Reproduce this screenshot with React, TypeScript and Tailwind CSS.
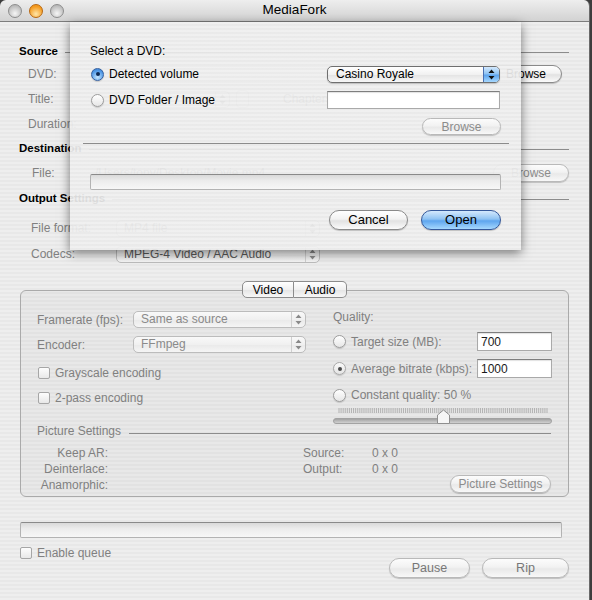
import React from 'react';

type Tone = 'normal' | 'disabled' | 'primary';

const buttonTones: Record<Tone, string> = {
  normal:
    'border-[#8a8a8a] text-black bg-[linear-gradient(180deg,#ffffff_0%,#f2f2f2_45%,#e2e2e2_55%,#fbfbfb_100%)]',
  disabled:
    'border-[#b9b9b9] text-[#8c8c8c] bg-[linear-gradient(180deg,#fcfcfc_0%,#f2f2f2_45%,#e9e9e9_55%,#f8f8f8_100%)]',
  primary:
    'border-[#34589a] text-black bg-[linear-gradient(180deg,#d4e9fd_0%,#8fc3f3_45%,#5ea5ee_55%,#a6d8fe_100%)]',
};

function AquaButton({ label, className = '', tone = 'normal' }: { label: string; className?: string; tone?: Tone }) {
  return (
    <div
      className={`flex items-center justify-center rounded-full border shadow-[0_1px_1px_rgba(0,0,0,0.2)] ${buttonTones[tone]} ${className}`}
    >
      {label}
    </div>
  );
}

function Arrows({ color }: { color: string }) {
  return (
    <svg width="7" height="11" viewBox="0 0 7 11">
      <path d="M3.5 0.5 L6.5 4 L0.5 4 Z M0.5 7 L6.5 7 L3.5 10.5 Z" fill={color} />
    </svg>
  );
}

function Popup({ text, className = '', tone = 'disabled' }: { text: string; className?: string; tone?: 'disabled' | 'blue' | 'dim' }) {
  if (tone === 'blue') {
    return (
      <div
        className={`flex h-[17px] rounded-[5px] border border-[#6f6f6f] bg-[linear-gradient(180deg,#ffffff,#f1f1f1_50%,#e3e3e3_51%,#f7f7f7)] shadow-[0_1px_1px_rgba(0,0,0,0.2)] overflow-hidden text-black ${className}`}
      >
        <span className="flex-1 pl-[8px] leading-[15px] truncate">{text}</span>
        <span className="w-[16px] flex items-center justify-center border-l border-[#4a6fb0] bg-[linear-gradient(180deg,#d4e9fd_0%,#8fc3f3_45%,#5ea5ee_55%,#a6d8fe_100%)]">
          <Arrows color="#111" />
        </span>
      </div>
    );
  }
  const text_ = tone === 'dim' ? 'text-[#5a5a5a]' : 'text-[#8a8a8a]';
  return (
    <div
      className={`flex h-[17px] rounded-[5px] border border-[#bcbcbc] bg-[linear-gradient(180deg,#f9f9f9,#f0f0f0_50%,#e9e9e9_51%,#f5f5f5)] overflow-hidden ${text_} ${className}`}
    >
      <span className="flex-1 pl-[7px] leading-[15px] truncate">{text}</span>
      <span className="w-[14px] flex items-center justify-center border-l border-[#cfcfcf]">
        <Arrows color="#8a8a8a" />
      </span>
    </div>
  );
}

function Checkbox({ label, className = '' }: { label: string; className?: string }) {
  return (
    <div className={`h-[16px] flex items-center ${className}`}>
      <span className="w-[12px] h-[12px] rounded-[2px] border border-[#a6a6a6] bg-[linear-gradient(180deg,#fdfdfd,#e8e8e8)]" />
      <span className="ml-[5px]">{label}</span>
    </div>
  );
}

function Radio({ label, checked = false, blue = false }: { label: string; checked?: boolean; blue?: boolean }) {
  const bulb = blue
    ? 'border-[#35609f] bg-[radial-gradient(circle_at_50%_75%,#c6e6ff,#4f98e6_65%,#3a7fd0)]'
    : blue === false && checked
      ? 'border-[#a8a8a8] bg-[linear-gradient(180deg,#fafafa,#e4e4e4)]'
      : 'border-[#9c9c9c] bg-[linear-gradient(180deg,#ffffff,#e6e6e6)]';
  return (
    <div className="flex items-center">
      <span className={`w-[13px] h-[13px] rounded-full border flex items-center justify-center shadow-[0_1px_1px_rgba(0,0,0,0.15)] ${bulb}`}>
        {checked && <span className={`w-[4px] h-[4px] rounded-full ${blue ? 'bg-[#0d2a55]' : 'bg-[#4a4a4a]'}`} />}
      </span>
      <span className="ml-[5px]">{label}</span>
    </div>
  );
}

function TextField({ value = '', className = '' }: { value?: string; className?: string }) {
  return (
    <div
      className={`bg-white border border-[#a9a9a9] border-t-[#7e7e7e] shadow-[inset_0_1px_1px_rgba(0,0,0,0.12)] pl-[3px] flex items-center text-[#1a1a1a] ${className}`}
    >
      {value}
    </div>
  );
}

function ProgressBar({ className = '' }: { className?: string }) {
  return (
    <div
      className={`h-[16px] rounded-[2px] border border-[#b3b3b3] border-t-[#8a8a8a] bg-[linear-gradient(180deg,#d9d9d9,#ececec_40%,#f7f7f7)] ${className}`}
    />
  );
}

function SectionHeader({ title, className = '' }: { title: string; className?: string }) {
  return (
    <div className={`h-[16px] flex items-center gap-[7px] ${className}`}>
      <span className="font-bold text-[11.5px] text-black">{title}</span>
      <span className="flex-1 h-px bg-[#8c8c8c]" />
    </div>
  );
}

function Slider() {
  const ticks = Array.from({ length: 101 }, (_, i) => 6 + i * 2.08);
  return (
    <svg width="219" height="20" viewBox="0 0 219 20">
      {ticks.map((x) => (
        <line key={x} x1={x} y1="3" x2={x} y2="8" stroke="#a4a4a4" strokeWidth="0.8" />
      ))}
      <defs>
        <linearGradient id="track" x1="0" y1="0" x2="0" y2="1">
          <stop offset="0" stopColor="#9c9c9c" />
          <stop offset="1" stopColor="#d6d6d6" />
        </linearGradient>
      </defs>
      <rect x="0.5" y="13.5" width="218" height="5" rx="2.5" fill="url(#track)" stroke="#a2a2a2" />
      <polygon points="110.5,5 116.5,10 116.5,18.5 104.5,18.5 104.5,10" fill="#f6f6f6" stroke="#8e8e8e" />
    </svg>
  );
}

function TrafficLights() {
  return (
    <div className="flex items-center gap-[7px] pl-[8px]">
      <span className="w-[14px] h-[14px] rounded-full border border-[#8d8d8d] bg-[radial-gradient(circle_at_50%_70%,#f6f6f6,#b9b9b9_75%)]" />
      <span className="w-[14px] h-[14px] rounded-full border border-[#b86710] bg-[radial-gradient(circle_at_50%_75%,#ffe6a8,#f49a1e_70%)]" />
      <span className="w-[14px] h-[14px] rounded-full border border-[#8d8d8d] bg-[radial-gradient(circle_at_50%_70%,#f6f6f6,#b9b9b9_75%)]" />
    </div>
  );
}

export default function App() {
  return (
    <div className="w-[592px] h-[600px] overflow-hidden bg-[#3d3d3d] font-['Liberation_Sans',Arial,sans-serif] text-[12px]">
      <div className="relative w-[590px] h-[600px] flex flex-col rounded-t-[6px] overflow-hidden border-r border-[#6a6a6a]">
        {/* Title bar */}
        <div className="relative h-[22px] flex items-center border-b border-[#7d7d7d] bg-[linear-gradient(180deg,#eeeeee,#d2d2d2)]">
          <TrafficLights />
          <span className="absolute inset-x-0 text-center text-[13.5px] text-black">MediaFork</span>
        </div>

        {/* Window body */}
        <div className="flex-1 flex flex-col pl-[19px] pr-[20px] text-[#808080] bg-[repeating-linear-gradient(180deg,#eeeeee_0px,#eeeeee_2px,#e8e8e8_2px,#e8e8e8_4px)]">
          <SectionHeader title="Source" className="mt-[22px]" />
          <div className="mt-[5px] h-[18px] flex items-center">
            <span className="ml-[9px] w-[88px]">DVD:</span>
            <Popup text="" className="w-[360px]" />
            <AquaButton label="Browse" className="ml-auto mr-[7px] w-[72px] h-[18px]" />
          </div>
          <div className="mt-[7px] h-[18px] flex items-center">
            <span className="ml-[9px] w-[88px]">Title:</span>
            <Popup text="" className="w-[114px]" />
            <span className="ml-[6px] w-[13px] h-[18px] rounded-[4px] border border-[#c6c6c6]" />
            <span className="ml-[34px]">Chapters:</span>
          </div>
          <div className="mt-[7px] h-[18px] flex items-center">
            <span className="ml-[9px] w-[88px]">Duration:</span>
          </div>

          <SectionHeader title="Destination" className="mt-[8px]" />
          <div className="mt-[7px] h-[18px] flex items-center">
            <span className="ml-[13px] w-[63px]">File:</span>
            <span>/Users/tony/Desktop/Movie.mp4</span>
            <AquaButton label="Browse" tone="disabled" className="ml-auto w-[76px] h-[18px]" />
          </div>

          <SectionHeader title="Output Settings" className="mt-[9px]" />
          <div className="mt-[12px] h-[18px] flex items-center">
            <span className="ml-[12px] w-[85px]">File format:</span>
            <Popup text="MP4 file" className="w-[204px]" />
          </div>
          <div className="mt-[8px] h-[18px] flex items-center">
            <span className="ml-[12px] w-[85px]">Codecs:</span>
            <Popup text="MPEG-4 Video / AAC Audio" tone="dim" className="w-[204px]" />
          </div>

          {/* Tabs */}
          <div className="relative z-10 mt-[18px] ml-[1px] flex justify-center text-black text-[12px]">
            <div className="w-[52px] h-[17px] flex items-center justify-center rounded-l-[5px] border border-[#8c8c8c] bg-[linear-gradient(180deg,#ffffff,#f0f0f0_50%,#e4e4e4_51%,#f7f7f7)]">
              Video
            </div>
            <div className="w-[53px] h-[17px] flex items-center justify-center rounded-r-[5px] border border-l-0 border-[#8c8c8c] bg-[linear-gradient(180deg,#ffffff,#f0f0f0_50%,#e4e4e4_51%,#f7f7f7)]">
              Audio
            </div>
          </div>
          <div className="-mt-[8px] ml-[1px] h-[207px] flex flex-col rounded-[6px] border border-[#aaaaaa] bg-black/[0.025]">
            <div className="h-[132px] grid grid-cols-[312px_1fr]">
              {/* Video left column */}
              <div className="pl-[16px] flex flex-col">
                <div className="mt-[20px] h-[17px] flex items-center">
                  <span className="w-[96px]">Framerate (fps):</span>
                  <Popup text="Same as source" className="w-[173px]" />
                </div>
                <div className="mt-[8px] h-[17px] flex items-center">
                  <span className="w-[96px]">Encoder:</span>
                  <Popup text="FFmpeg" className="w-[173px]" />
                </div>
                <Checkbox label="Grayscale encoding" className="mt-[12px] ml-[1px]" />
                <Checkbox label="2-pass encoding" className="mt-[9px] ml-[1px]" />
              </div>

              {/* Quality column */}
              <div className="pr-[17px] flex flex-col">
                <div className="mt-[18px] h-[16px] flex items-center">Quality:</div>
                <div className="mt-[7px] h-[19px] flex items-center">
                  <Radio label="Target size (MB):" />
                  <TextField value="700" className="ml-auto w-[75px] h-[19px]" />
                </div>
                <div className="mt-[8px] h-[19px] flex items-center">
                  <Radio label="Average bitrate (kbps):" checked />
                  <TextField value="1000" className="ml-auto w-[75px] h-[19px]" />
                </div>
                <div className="mt-[9px] h-[16px] flex items-center">
                  <Radio label="Constant quality: 50 %" />
                </div>
                <div className="mt-[2px] h-[20px]">
                  <Slider />
                </div>
              </div>
            </div>

            {/* Picture Settings */}
            <div className="h-[16px] pl-[16px] pr-[17px] flex items-center gap-[8px]">
              <span>Picture Settings</span>
              <span className="flex-1 h-px mt-[5px] bg-[#8c8c8c]" />
            </div>
            <div className="mt-[6px] pl-[16px] pr-[17px] flex">
              <div className="w-[71px] flex flex-col text-right">
                <span className="h-[16px] leading-[16px]">Keep AR:</span>
                <span className="h-[16px] leading-[16px]">Deinterlace:</span>
                <span className="h-[16px] leading-[16px]">Anamorphic:</span>
              </div>
              <div className="ml-[195px] flex flex-col">
                <div className="h-[16px] flex items-center">
                  <span className="w-[69px]">Source:</span>
                  <span>0 x 0</span>
                </div>
                <div className="h-[16px] flex items-center">
                  <span className="w-[69px]">Output:</span>
                  <span>0 x 0</span>
                </div>
              </div>
              <AquaButton
                label="Picture Settings"
                tone="disabled"
                className="ml-auto self-end w-[101px] h-[18px] text-[#6e6e6e]"
              />
            </div>
          </div>

          {/* Progress and actions */}
          <ProgressBar className="mt-[25px] ml-[1px] mr-[7px]" />
          <div className="mt-[7px] flex items-start">
            <Checkbox label="Enable queue" className="ml-[1px]" />
            <div className="ml-auto mt-[13px] flex gap-[12px] text-[12.5px]">
              <AquaButton label="Pause" tone="disabled" className="w-[81px] h-[20px] text-[#777]" />
              <AquaButton label="Rip" tone="disabled" className="w-[87px] h-[20px] text-[#777]" />
            </div>
          </div>
        </div>

        {/* Sheet */}
        <div className="absolute left-[70px] top-[22px] w-[451px] h-[228px] px-[20px] flex flex-col text-black shadow-[0_3px_10px_rgba(0,0,0,0.5)] bg-[repeating-linear-gradient(180deg,rgba(240,240,240,0.93)_0px,rgba(240,240,240,0.93)_2px,rgba(234,234,234,0.93)_2px,rgba(234,234,234,0.93)_4px)]">
          <div className="mt-[21px] h-[16px] leading-[16px]">Select a DVD:</div>
          <div className="mt-[6px] h-[18px] flex items-center">
            <div className="w-[237px] pl-[1px]">
              <Radio label="Detected volume" checked blue />
            </div>
            <Popup text="Casino Royale" tone="blue" className="w-[173px]" />
          </div>
          <div className="mt-[8px] h-[18px] flex items-center">
            <div className="w-[237px] pl-[1px]">
              <Radio label="DVD Folder / Image" />
            </div>
            <TextField className="w-[173px] h-[18px]" />
          </div>
          <div className="mt-[9px] flex justify-end">
            <AquaButton label="Browse" tone="disabled" className="w-[79px] h-[17px]" />
          </div>
          <div className="mt-[8px] -ml-[7px] -mr-[8px] h-px bg-[#8c8c8c]" />
          <ProgressBar className="mt-[30px]" />
          <div className="mt-[20px] flex justify-end gap-[13px] text-[13px]">
            <AquaButton label="Cancel" className="w-[79px] h-[20px]" />
            <AquaButton label="Open" tone="primary" className="w-[80px] h-[20px]" />
          </div>
        </div>
      </div>
    </div>
  );
}
